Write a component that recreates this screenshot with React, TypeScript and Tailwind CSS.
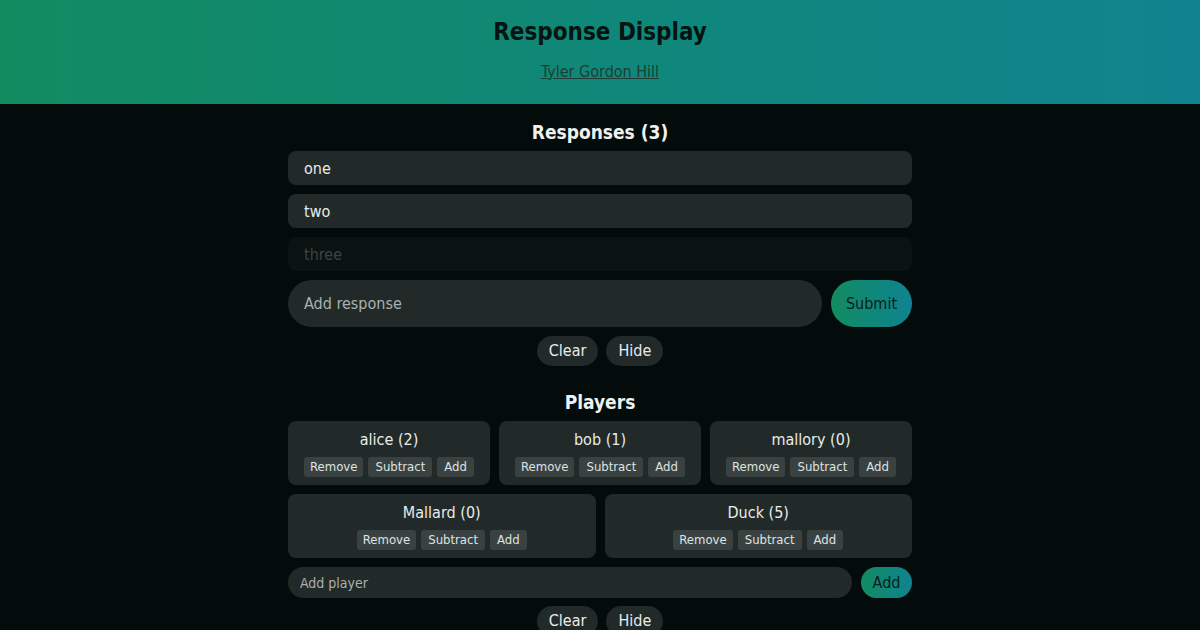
import React from 'react';

const responses = [
  { text: 'one', hidden: false },
  { text: 'two', hidden: false },
  { text: 'three', hidden: true },
];

const players = [
  [
    { name: 'alice', score: 2 },
    { name: 'bob', score: 1 },
    { name: 'mallory', score: 0 },
  ],
  [
    { name: 'Mallard', score: 0 },
    { name: 'Duck', score: 5 },
  ],
];

const PlayerCard: React.FC<{ name: string; score: number }> = ({ name, score }) => (
  <div className="flex-1 bg-[#212a29] rounded-lg flex flex-col items-center pt-[7px] pb-[8px]">
    <p className="text-[16px] text-[#e8ecea] leading-[24px]">
      {name} ({score})
    </p>
    <div className="flex gap-[5px] mt-[5px]">
      <button className="bg-[#394241] text-[#dfe3e2] text-[13px] leading-[20px] px-[6px] rounded-[3px]">Remove</button>
      <button className="bg-[#394241] text-[#dfe3e2] text-[13px] leading-[20px] px-[7px] rounded-[3px]">Subtract</button>
      <button className="bg-[#394241] text-[#dfe3e2] text-[13px] leading-[20px] px-[7px] rounded-[3px]">Add</button>
    </div>
  </div>
);

const PillRow: React.FC = () => (
  <div className="flex justify-center gap-[8px]">
    <button className="bg-[#212a29] text-[#e8ecea] text-[16px] h-[30px] px-[12px] rounded-full">Clear</button>
    <button className="bg-[#212a29] text-[#e8ecea] text-[16px] h-[30px] px-[12px] rounded-full">Hide</button>
  </div>
);

export default function App() {
  return (
    <div
      className="min-h-[630px] bg-[#030c0b] text-white"
      style={{ fontFamily: '"DejaVu Sans Condensed", "DejaVu Sans", sans-serif' }}
    >
      <header className="h-[104px] bg-gradient-to-r from-[#138b60] to-[#11838f] flex flex-col items-center pt-[16px]">
        <h1 className="text-[24px] font-bold text-[#041410] leading-[32px]">Response Display</h1>
        <a href="#" className="mt-[13px] text-[16px] text-[#1d3d35] underline leading-[22px]">
          Tyler Gordon Hill
        </a>
      </header>

      <main className="w-[624px] mx-auto">
        <h2 className="text-[19px] font-bold text-[#eef1f0] text-center mt-[16px] leading-[24px]">Responses (3)</h2>
        <div className="flex flex-col gap-[9px] mt-[7px]">
          {responses.map(r => (
            <div
              key={r.text}
              className={
                r.hidden
                  ? 'h-[34px] rounded-lg bg-[#0a1312] px-[16px] flex items-center text-[16px] text-[#3b4544]'
                  : 'h-[34px] rounded-lg bg-[#212a29] px-[16px] flex items-center text-[16px] text-[#e8ecea]'
              }
            >
              <span className="mt-[2px]">{r.text}</span>
            </div>
          ))}
        </div>

        <div className="flex gap-[9px] mt-[9px]">
          <input
            placeholder="Add response"
            className="flex-1 h-[47px] rounded-full bg-[#212a29] px-[16px] text-[16px] text-white placeholder:text-[#a9b1af] outline-none"
          />
          <button className="w-[81px] h-[47px] rounded-full bg-gradient-to-r from-[#138b60] to-[#11838f] text-[16px] text-[#0a201b]">
            Submit
          </button>
        </div>

        <div className="mt-[9px]">
          <PillRow />
        </div>

        <h2 className="text-[19px] font-bold text-[#eef1f0] text-center mt-[24px] leading-[24px]">Players</h2>
        <div className="flex flex-col gap-[9px] mt-[7px]">
          {players.map((row, i) => (
            <div key={i} className="flex gap-[9px]">
              {row.map(p => (
                <PlayerCard key={p.name} name={p.name} score={p.score} />
              ))}
            </div>
          ))}
        </div>

        <div className="flex gap-[9px] mt-[9px]">
          <input
            placeholder="Add player"
            className="flex-1 h-[31px] rounded-full bg-[#212a29] px-[12px] text-[14px] text-white placeholder:text-[#a9b1af] outline-none"
          />
          <button className="w-[51px] h-[31px] rounded-full bg-gradient-to-r from-[#138b60] to-[#11838f] text-[16px] text-[#0a201b]">
            Add
          </button>
        </div>

        <div className="mt-[8px] pb-[10px]">
          <PillRow />
        </div>
      </main>
    </div>
  );
}
